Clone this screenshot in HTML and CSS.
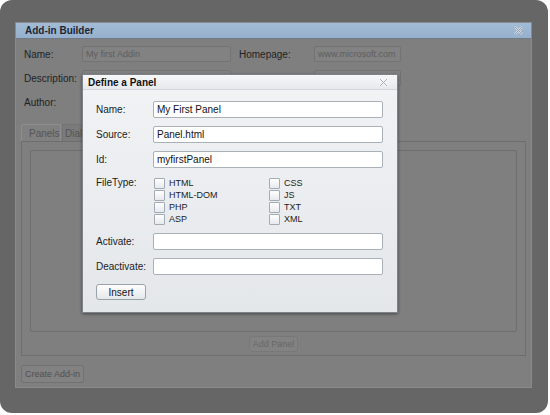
FILE: index.html
```html
<!DOCTYPE html>
<html lang="en">
<head>
    <meta charset="UTF-8">
    <title>Add-in Builder</title>
    <link rel="stylesheet" href="styles.css">
</head>
<body>
    <div class="frame">
        <div class="builder">
            <div class="titlebar">
                <span>Add-in Builder</span>
                <svg class="close" width="9" height="9" viewBox="0 0 9 9"><path d="M1 1L8 8M8 1L1 8" stroke="#d8dde3" stroke-width="2.2"/><path d="M1 1L8 8M8 1L1 8" stroke="#8d949c" stroke-width="0.9"/></svg>
            </div>

            <div class="builder-form">
                <label>Name:</label>
                <div class="field">My first Addin</div>
                <label>Homepage:</label>
                <div class="field">www.microsoft.com</div>

                <label>Description:</label>
                <div class="field"></div>
                <label></label>
                <div class="field"></div>

                <label>Author:</label>
                <div class="field"></div>
            </div>

            <div class="tabs">
                <div class="tab active">Panels</div>
                <div class="tab partial">Dial</div>
            </div>
            <div class="tab-panel">
                <div class="panel-list"></div>
                <div class="btn dim">Add Panel</div>
            </div>
            <div class="btn dim create">Create Add-in</div>
        </div>

        <!-- modal dialog over the builder -->
        <div class="dialog">
            <div class="dialog-title">
                <span>Define a Panel</span>
                <svg class="close" width="9" height="9" viewBox="0 0 9 9"><path d="M1 1L8 8M8 1L1 8" stroke="#fafbfc" stroke-width="2.2"/><path d="M1 1L8 8M8 1L1 8" stroke="#9aa1a8" stroke-width="0.9"/></svg>
            </div>
            <div class="panel-form">
                <label>Name:</label>
                <input type="text" value="My First Panel">

                <label>Source:</label>
                <input type="text" value="Panel.html">

                <label>Id:</label>
                <input type="text" value="myfirstPanel">

                <label class="top">FileType:</label>
                <div class="types">
                    <div class="check"><span class="box"></span>HTML</div>
                    <div class="check"><span class="box"></span>CSS</div>
                    <div class="check"><span class="box"></span>HTML-DOM</div>
                    <div class="check"><span class="box"></span>JS</div>
                    <div class="check"><span class="box"></span>PHP</div>
                    <div class="check"><span class="box"></span>TXT</div>
                    <div class="check"><span class="box"></span>ASP</div>
                    <div class="check"><span class="box"></span>XML</div>
                </div>

                <label>Activate:</label>
                <input type="text">

                <label>Deactivate:</label>
                <input type="text">
            </div>
            <div class="btn insert">Insert</div>
        </div>
    </div>
</body>
</html>
```

FILE: styles.css
```css
/* General */
body {
    margin: 0;
    background: white;
    font-family: "Liberation Sans", Arial, sans-serif;
    font-size: 10px;
}

.frame {
    position: relative;
    width: 548px;
    height: 413px;
    background: #666666;
    border-radius: 12px;
    padding: 22px 0 0 15px;
    box-sizing: border-box;
}

.close {
    display: block;
}

/* Builder (dimmed behind the modal) */
.builder {
    width: 517px;
    height: 366px;
    background: #7f7f7f;
    border: 1px solid #8a8a8a;
    box-sizing: border-box;
    color: #222;
}

.titlebar {
    display: flex;
    justify-content: space-between;
    align-items: center;
    height: 15px;
    padding: 0 8px 0 9px;
    background: linear-gradient(#a2bbd6, #96b0cd);
    border-bottom: 1px solid #6f7a86;
    font-weight: bold;
    color: #1d2632;
}

.builder-form {
    display: grid;
    grid-template-columns: 58px 149px 83px 87px;
    row-gap: 8px;
    padding: 7px 0 0 8px;
    align-items: center;
}

.builder-form label:nth-of-type(even) {
    padding-left: 8px;
}

.field {
    height: 16px;
    box-sizing: border-box;
    border: 1px solid #737373;
    border-radius: 2px;
    background: #828282;
    color: #5e5e5e;
    padding: 1px 3px;
    line-height: 12px;
    font-size: 9px;
    white-space: nowrap;
}

.tabs {
    display: flex;
    gap: 1px;
    margin: 14px 0 0 5px;
}

.tab {
    height: 17px;
    padding: 0 7px;
    line-height: 17px;
    box-sizing: border-box;
    border: 1px solid #747474;
    border-bottom: none;
    background: #7a7a7a;
    color: #555;
    border-radius: 2px 2px 0 0;
    white-space: nowrap;
}

.tab.active {
    background: #808080;
    border-color: #8e8e8e;
    width: 40px;
}

.tab.partial {
    width: 20px;
    padding: 0 0 0 2px;
    border-right: none;
}

.tab-panel {
    margin-left: 5px;
    width: 505px;
    height: 215px;
    box-sizing: border-box;
    border: 1px solid #6e6e6e;
    padding: 8px 8px 0 8px;
    display: flex;
    flex-direction: column;
    align-items: center;
}

.panel-list {
    align-self: stretch;
    height: 182px;
    border: 1px solid #6e6e6e;
    border-radius: 2px;
    box-sizing: border-box;
}

.btn {
    height: 16px;
    padding: 0 6px;
    line-height: 15px;
    box-sizing: border-box;
    border-radius: 3px;
    text-align: center;
    white-space: nowrap;
}

.btn.dim {
    margin-top: 4px;
    padding: 0 3px;
    border: 1px solid #787878;
    background: #828282;
    color: #686868;
    font-size: 9px;
}

.btn.create {
    width: 63px;
    height: 18px;
    line-height: 17px;
    margin: 9px 0 0 5px;
    padding: 0;
    color: #505050;
    border-color: #717171;
}

/* Modal dialog */
.dialog {
    position: absolute;
    left: 82px;
    top: 74px;
    width: 316px;
    height: 239px;
    box-sizing: border-box;
    border: 1px solid #7d8389;
    background: linear-gradient(#f1f3f5, #e4e7ea);
    box-shadow: 0 1px 3px rgba(0, 0, 0, 0.45);
    color: #1c1c1c;
}

.dialog-title {
    display: flex;
    justify-content: space-between;
    align-items: center;
    height: 14px;
    padding: 0 9px 0 5px;
    background: linear-gradient(#f6f7f8, #e6e9ec);
    border-bottom: 1px solid #d3d7db;
    font-weight: bold;
    color: #111;
}

.panel-form {
    display: grid;
    grid-template-columns: 57px 230px;
    row-gap: 8px;
    padding: 11px 0 0 13px;
    align-items: center;
}

.panel-form label.top {
    align-self: start;
    padding-top: 1px;
}

.panel-form input {
    height: 17px;
    width: 230px;
    margin: 0;
    box-sizing: border-box;
    border: 1px solid #a9b0b7;
    border-radius: 2px;
    background: white;
    padding: 0 3px;
    font-family: "Liberation Sans", Arial, sans-serif;
    font-size: 10px;
    color: #111;
}

.types {
    display: grid;
    grid-template-columns: 115px 100px;
    grid-auto-rows: 12px;
    padding-top: 1px;
    margin-left: 1px;
}

.check {
    display: flex;
    align-items: center;
    gap: 4px;
    color: #222;
    font-size: 9px;
}

.box {
    width: 9px;
    height: 9px;
    border: 1px solid #a3acb6;
    border-radius: 1px;
    background: linear-gradient(#ffffff, #e6e9ec);
}

.btn.insert {
    width: 50px;
    margin: 9px 0 0 13px;
    border: 1px solid #9aa1a8;
    background: linear-gradient(#fdfdfd, #e5e8eb);
    color: #111;
}
```
